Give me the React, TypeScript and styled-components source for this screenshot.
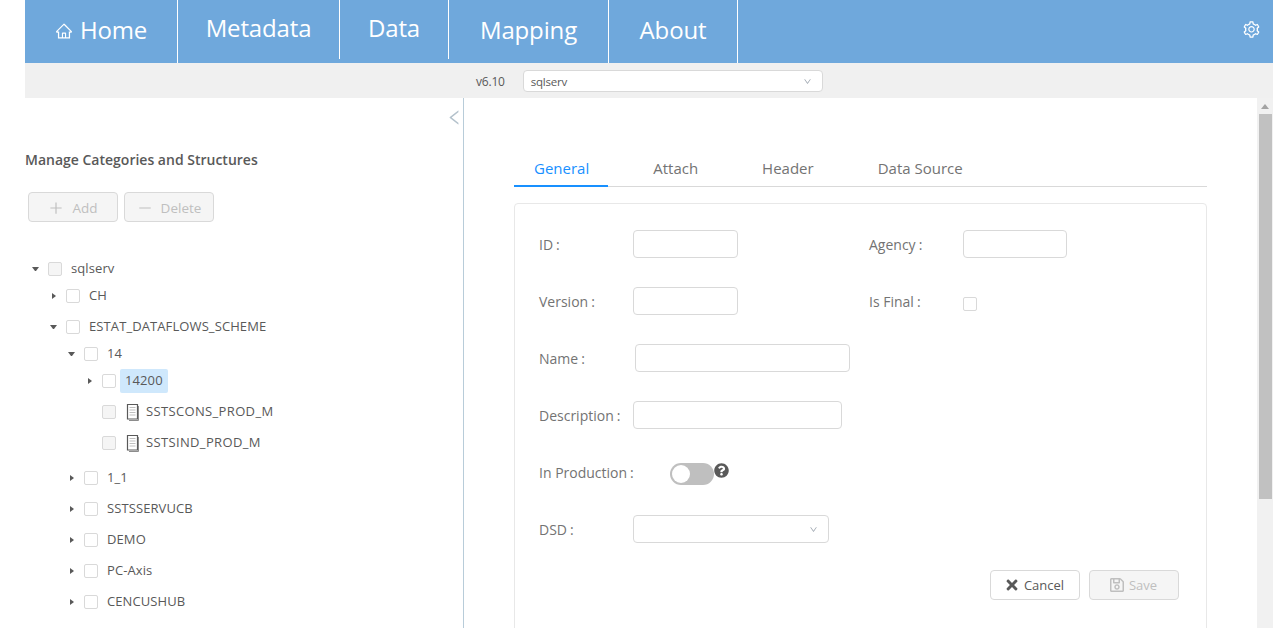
import React from "react";
import styled, { createGlobalStyle } from "styled-components";
import { AiOutlineDown, AiOutlineHome, AiOutlineLeft, AiOutlineMinus, AiOutlinePlus, AiOutlineSetting } from "react-icons/ai";
import { FaQuestionCircle, FaRegSave, FaTimes } from "react-icons/fa";

const GlobalStyle = createGlobalStyle`
    html, body {
        margin: 0;
        padding: 0;
        background: #fff;
        overflow: hidden;
    }
    * {
        box-sizing: border-box;
    }
`
const Page = styled.div`
    display: flex;
    flex-direction: column;
    width: 1248px;
    height: 628px;
    margin-left: 25px;
    font-family: "Open Sans", "Noto Sans", sans-serif;
    overflow: hidden;
`
const Navbar = styled.div`
    display: flex;
    justify-content: space-between;
    height: 63px;
    flex-shrink: 0;
    background: #6fa8dc;
`
const NavList = styled.div`
    display: flex;
`
const NavItem = styled.div<{ $width: number; $full?: boolean }>`
    display: flex;
    align-items: center;
    justify-content: center;
    gap: 7px;
    width: ${(p) => p.$width}px;
    height: ${(p) => (p.$full ? 63 : 59)}px;
    padding-bottom: 5px;
    border-right: 1px solid #fff;
    color: #fff;
    font-size: 24px;
    letter-spacing: -0.15px;
`
const HomeIcon = styled(AiOutlineHome)`
    margin-top: 3px;
    font-size: 18px;
`
const GearButton = styled.div`
    display: flex;
    align-items: center;
    padding: 0 12px 4px 0;
    color: #fff;
    font-size: 19px;
`
const VersionBar = styled.div`
    display: flex;
    align-items: center;
    height: 35px;
    flex-shrink: 0;
    padding: 1px 0 0 451px;
    gap: 18px;
    background: #f0f0f0;
    color: #595959;
    font-size: 12px;
    letter-spacing: -0.2px;
`
const VersionSelect = styled.div`
    display: flex;
    align-items: center;
    justify-content: space-between;
    width: 300px;
    height: 22px;
    padding: 0 10px 0 7px;
    border: 1px solid #d9d9d9;
    border-radius: 4px;
    background: #fff;
    font-size: 11.5px;
    color: #595959;
`
const Chevron = styled(AiOutlineDown)`
    font-size: 9px;
    color: #9aa3ad;
`
const Body = styled.div`
    display: flex;
    flex: 1;
    min-height: 0;
`
const LeftPanel = styled.div`
    position: relative;
    width: 439px;
    flex-shrink: 0;
    padding-top: 52px;
    border-right: 1px solid #b8ccd9;
`
const CollapseIcon = styled(AiOutlineLeft)`
    position: absolute;
    top: 10px;
    right: -1px;
    font-size: 19px;
    color: #b4c2cc;
`
const PanelTitle = styled.h2`
    margin: 0;
    color: #595959;
    font-size: 14px;
    font-weight: 600;
    line-height: 20px;
`
const Toolbar = styled.div`
    display: flex;
    gap: 6px;
    margin: 22px 0 0 3px;
`
const ToolButton = styled.div`
    display: flex;
    align-items: center;
    justify-content: center;
    gap: 8px;
    width: 90px;
    height: 30px;
    padding-top: 1px;
    border: 1px solid #d9d9d9;
    border-radius: 4px;
    background: #f5f5f5;
    color: #bfbfbf;
    font-size: 13.5px;
    font-weight: 500;
    svg {
        font-size: 16px;
    }
`
const Tree = styled.div`
    display: flex;
    flex-direction: column;
    margin-top: 35px;
`
const TreeRow = styled.div<{ $level: number; $gap: number }>`
    display: flex;
    align-items: center;
    height: 24px;
    margin-top: ${(p) => p.$gap}px;
    padding-left: ${(p) => 7 + p.$level * 18}px;
    color: #595959;
    font-size: 13px;
    letter-spacing: 0.1px;
`
const Caret = styled.span<{ $open?: boolean; $hidden?: boolean }>`
    height: 0;
    visibility: ${(p) => (p.$hidden ? "hidden" : "visible")};
    ${(p) =>
        p.$open
            ? `width: 7px;
               margin-right: 9px;
               border-left: 3.5px solid transparent;
               border-right: 3.5px solid transparent;
               border-top: 4px solid #595959;`
            : `width: 4px;
               margin: 0 10px 0 2px;
               border-top: 3.5px solid transparent;
               border-bottom: 3.5px solid transparent;
               border-left: 4px solid #595959;`}
`
const TreeCheck = styled.span<{ $disabled?: boolean }>`
    width: 14px;
    height: 14px;
    flex-shrink: 0;
    margin-right: 4px;
    border: 1px solid #d9d9d9;
    border-radius: 2px;
    background: ${(p) => (p.$disabled ? "#f5f5f5" : "#fff")};
`
const TreeLabel = styled.span<{ $selected?: boolean; $leaf?: boolean }>`
    padding: 0 5px;
    height: 24px;
    line-height: 23px;
    border-radius: 2px;
    letter-spacing: ${(p) => (p.$leaf ? 0.35 : 0.1)}px;
    background: ${(p) => (p.$selected ? "#cfe8fc" : "transparent")};
`
const DocGlyph = styled.svg`
    width: 16px;
    height: 18px;
    flex-shrink: 0;
    margin-left: 5px;
`
const RightPanel = styled.div`
    flex: 1;
    min-width: 0;
    padding: 54px 50px 0 50px;
`
const TabBar = styled.div`
    display: flex;
    gap: 25px;
    height: 35px;
    border-bottom: 1px solid #d9d9d9;
`
const Tab = styled.div<{ $active?: boolean }>`
    padding: 0 19px 0 20px;
    height: 35px;
    line-height: 33px;
    font-size: 15px;
    color: ${(p) => (p.$active ? "#1890ff" : "#737373")};
    border-bottom: 2px solid ${(p) => (p.$active ? "#1890ff" : "transparent")};
`
const FormCard = styled.div`
    height: 500px;
    margin-top: 16px;
    padding: 26px 24px;
    border: 1px solid #e8e8e8;
    border-radius: 4px;
`
const FormRow = styled.div`
    display: flex;
    align-items: center;
    height: 28px;
    margin-bottom: 29px;
`
const Field = styled.div<{ $width?: number }>`
    display: flex;
    align-items: center;
    width: ${(p) => (p.$width ? `${p.$width}px` : "auto")};
`
const Label = styled.label<{ $width: number }>`
    width: ${(p) => p.$width}px;
    flex-shrink: 0;
    color: #737373;
    font-size: 14px;
`
const Colon = styled.span`
    margin-left: 3px;
`
const TextInput = styled.div<{ $width: number }>`
    width: ${(p) => p.$width}px;
    height: 28px;
    border: 1px solid #d9d9d9;
    border-radius: 4px;
    background: #fff;
`
const FinalCheck = styled.span`
    width: 14px;
    height: 14px;
    margin-top: 5px;
    border: 1px solid #d9d9d9;
    border-radius: 2px;
    background: #fff;
`
const Switch = styled.div`
    display: flex;
    align-items: center;
    width: 44px;
    height: 22px;
    margin-top: 4px;
    padding-left: 2px;
    border-radius: 11px;
    background: #bfbfbf;
    &::before {
        content: "";
        width: 18px;
        height: 18px;
        border-radius: 50%;
        background: #fff;
    }
`
const HelpIcon = styled(FaQuestionCircle)`
    align-self: flex-start;
    margin-top: 5px;
    font-size: 15px;
    color: #595959;
`
const SelectBox = styled(TextInput)`
    display: flex;
    align-items: center;
    justify-content: flex-end;
    padding-right: 10px;
`
const ButtonRow = styled.div`
    display: flex;
    justify-content: flex-end;
    gap: 9px;
    margin-top: -2px;
    padding-right: 3px;
`
const ActionButton = styled.div<{ $disabled?: boolean }>`
    display: flex;
    align-items: center;
    justify-content: center;
    gap: 4px;
    width: 90px;
    height: 30px;
    padding-right: 2px;
    border: 1px solid #d9d9d9;
    border-radius: 4px;
    background: ${(p) => (p.$disabled ? "#f5f5f5" : "#fff")};
    color: ${(p) => (p.$disabled ? "#bfbfbf" : "#595959")};
    font-size: 13px;
    svg {
        font-size: 16px;
    }
`
const ScrollTrack = styled.div`
    display: flex;
    flex-direction: column;
    align-items: flex-start;
    width: 16px;
    flex-shrink: 0;
    padding-left: 2px;
    background: #f1f1f1;
`
const ScrollArrow = styled.span`
    width: 0;
    height: 0;
    margin: 6px 0 5px 2px;
    border-left: 4px solid transparent;
    border-right: 4px solid transparent;
    border-bottom: 5px solid #a3a3a3;
`
const ScrollThumb = styled.div`
    width: 13px;
    height: 385px;
    background: #c1c1c1;
`

interface TreeNode {
    label: string;
    level: number;
    gap: number;
    open?: boolean;
    leaf?: boolean;
    disabled?: boolean;
    selected?: boolean;
}

const nodes: TreeNode[] = [
    { label: "sqlserv", level: 0, gap: 0, open: true, disabled: true },
    { label: "CH", level: 1, gap: 3 },
    { label: "ESTAT_DATAFLOWS_SCHEME", level: 1, gap: 7, open: true },
    { label: "14", level: 2, gap: 3, open: true },
    { label: "14200", level: 3, gap: 3, selected: true },
    { label: "SSTSCONS_PROD_M", level: 3, gap: 7, leaf: true, disabled: true },
    { label: "SSTSIND_PROD_M", level: 3, gap: 7, leaf: true, disabled: true },
    { label: "1_1", level: 2, gap: 11 },
    { label: "SSTSSERVUCB", level: 2, gap: 7 },
    { label: "DEMO", level: 2, gap: 7 },
    { label: "PC-Axis", level: 2, gap: 7 },
    { label: "CENCUSHUB", level: 2, gap: 7 },
];

const DocIcon = () => (
    <DocGlyph viewBox="0 0 16 18">
        <path d="M2.5 1.5h10v14.5h-10z" fill="#fff" stroke="#595959" strokeWidth="1.2" />
        <path d="M13.5 3v14.5H4" fill="none" stroke="#8c8c8c" strokeWidth="1" />
        <path d="M4.5 4.5h6M4.5 7h6M4.5 9.5h6M4.5 12h6" stroke="#bfbfbf" strokeWidth="1" />
    </DocGlyph>
);

const App = () => {
    return (
        <Page>
            <GlobalStyle />
            <Navbar>
                <NavList>
                    <NavItem $width={153} $full>
                        <HomeIcon />
                        Home
                    </NavItem>
                    <NavItem $width={162}>Metadata</NavItem>
                    <NavItem $width={109}>Data</NavItem>
                    <NavItem $width={160} $full>Mapping</NavItem>
                    <NavItem $width={129} $full>About</NavItem>
                </NavList>
                <GearButton>
                    <AiOutlineSetting />
                </GearButton>
            </Navbar>
            <VersionBar>
                <span>v6.10</span>
                <VersionSelect>
                    sqlserv
                    <Chevron />
                </VersionSelect>
            </VersionBar>
            <Body>
                <LeftPanel>
                    <CollapseIcon />
                    <PanelTitle>Manage Categories and Structures</PanelTitle>
                    <Toolbar>
                        <ToolButton>
                            <AiOutlinePlus />
                            Add
                        </ToolButton>
                        <ToolButton>
                            <AiOutlineMinus />
                            Delete
                        </ToolButton>
                    </Toolbar>
                    <Tree>
                        {nodes.map((node) => (
                            <TreeRow key={node.label} $level={node.level} $gap={node.gap}>
                                <Caret $open={node.open} $hidden={node.leaf} />
                                <TreeCheck $disabled={node.disabled} />
                                {node.leaf && <DocIcon />}
                                <TreeLabel $selected={node.selected} $leaf={node.leaf}>{node.label}</TreeLabel>
                            </TreeRow>
                        ))}
                    </Tree>
                </LeftPanel>
                <RightPanel>
                    <TabBar>
                        <Tab $active>General</Tab>
                        <Tab>Attach</Tab>
                        <Tab>Header</Tab>
                        <Tab>Data Source</Tab>
                    </TabBar>
                    <FormCard>
                        <FormRow>
                            <Field $width={330}>
                                <Label $width={94}>ID<Colon>:</Colon></Label>
                                <TextInput $width={105} />
                            </Field>
                            <Field>
                                <Label $width={94}>Agency<Colon>:</Colon></Label>
                                <TextInput $width={104} />
                            </Field>
                        </FormRow>
                        <FormRow>
                            <Field $width={330}>
                                <Label $width={94}>Version<Colon>:</Colon></Label>
                                <TextInput $width={105} />
                            </Field>
                            <Field>
                                <Label $width={94}>Is Final<Colon>:</Colon></Label>
                                <FinalCheck />
                            </Field>
                        </FormRow>
                        <FormRow>
                            <Label $width={96}>Name<Colon>:</Colon></Label>
                            <TextInput $width={215} />
                        </FormRow>
                        <FormRow>
                            <Label $width={94}>Description<Colon>:</Colon></Label>
                            <TextInput $width={209} />
                        </FormRow>
                        <FormRow>
                            <Label $width={131}>In Production<Colon>:</Colon></Label>
                            <Switch />
                            <HelpIcon />
                        </FormRow>
                        <FormRow>
                            <Label $width={94}>DSD<Colon>:</Colon></Label>
                            <SelectBox $width={196}>
                                <Chevron />
                            </SelectBox>
                        </FormRow>
                        <ButtonRow>
                            <ActionButton>
                                <FaTimes />
                                Cancel
                            </ActionButton>
                            <ActionButton $disabled>
                                <FaRegSave />
                                Save
                            </ActionButton>
                        </ButtonRow>
                    </FormCard>
                </RightPanel>
                <ScrollTrack>
                    <ScrollArrow />
                    <ScrollThumb />
                </ScrollTrack>
            </Body>
        </Page>
    );
};

export default App;
